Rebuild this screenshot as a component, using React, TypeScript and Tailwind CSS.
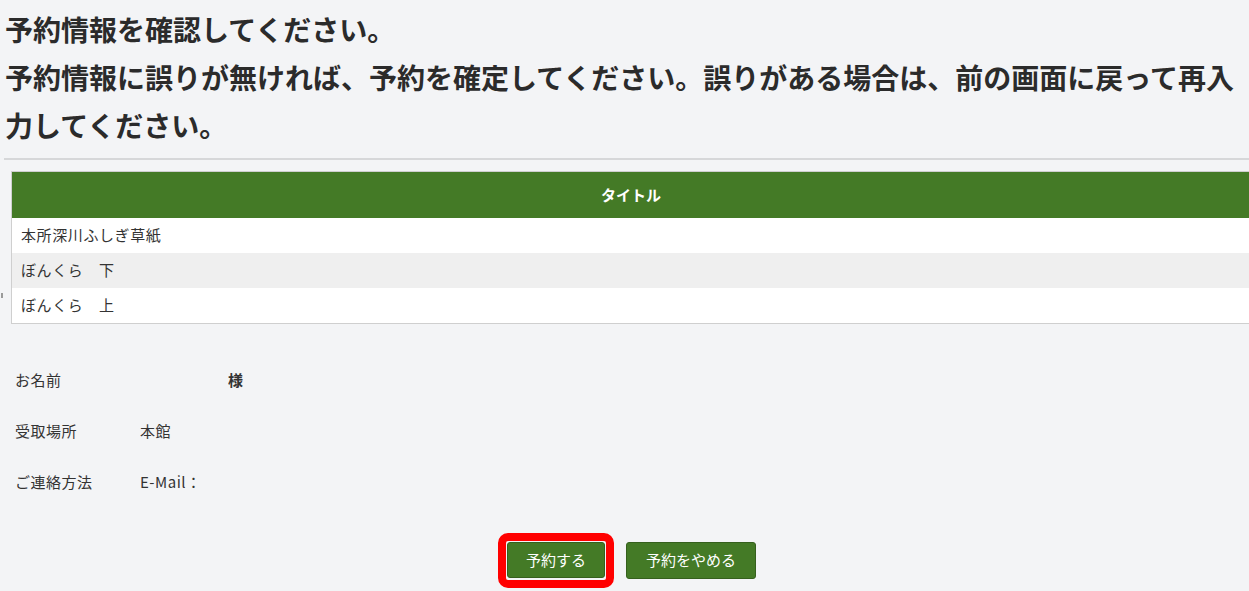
import React from 'react'

const titles = ['本所深川ふしぎ草紙', 'ぼんくら　下', 'ぼんくら　上']

const details = [
  { label: 'お名前', value: '', suffix: '様' },
  { label: '受取場所', value: '本館', suffix: '' },
  { label: 'ご連絡方法', value: 'E-Mail：', suffix: '' },
]

export default function App() {
  return (
    <div
      className="min-h-screen w-[1249px] overflow-hidden bg-[#f3f4f6] text-[#333]"
      style={{ fontFamily: '"Noto Sans CJK JP", "Noto Sans", sans-serif' }}
    >
      <div className="px-[5px] pt-[5px]">
        <h1 className="text-[28px] font-bold leading-[48px] text-[#2b2b2b]">
          予約情報を確認してください。
          <br />
          予約情報に誤りが無ければ、予約を確定してください。誤りがある場合は、前の画面に戻って再入力してください。
        </h1>
      </div>

      <div className="ml-[4px] mt-[9px] h-[2px] bg-[#d6d7d9]" />

      {/* title table */}
      <div className="relative ml-[11px] mt-[11px] w-[1240px] border border-[#cfcfcf] bg-white">
        <div className="flex h-[46px] items-center justify-center bg-[#447a26] text-[15px] font-bold text-white">
          タイトル
        </div>
        {titles.map((t, i) => (
          <div
            key={t}
            className={`flex h-[35px] items-center px-[9px] text-[15px] tracking-[0.6px] ${
              i % 2 === 1 ? 'bg-[#efefef]' : 'bg-white'
            }`}
          >
            {t}
          </div>
        ))}
        <span className="absolute left-[-11px] top-[121px] h-[5px] w-[2px] bg-[#9a9a9a]" />
      </div>

      {/* reservation details */}
      <div className="ml-[15px] mt-[46px] flex flex-col gap-[30px] text-[15px] tracking-[0.5px]">
        {details.map((d) => (
          <div key={d.label} className="flex h-[21px] items-center">
            <span className="w-[125px]">{d.label}</span>
            <span className="w-[88px]">{d.value}</span>
            {d.suffix && <span className="font-bold">{d.suffix}</span>}
          </div>
        ))}
      </div>

      {/* actions */}
      <div className="mt-[49px] flex justify-center gap-[21px] pl-[14px]">
        <div className="relative">
          <button
            type="button"
            className="h-[36px] w-[98px] rounded-[3px] border border-[#35601d] bg-[#447a26] text-[15px] text-white"
          >
            予約する
          </button>
          <span className="pointer-events-none absolute -inset-[9px] rounded-[10px] border-[8px] border-[#ff0000]" />
        </div>
        <button
          type="button"
          className="h-[37px] w-[130px] rounded-[3px] border border-[#35601d] bg-[#447a26] text-[15px] text-white"
        >
          予約をやめる
        </button>
      </div>
    </div>
  )
}
